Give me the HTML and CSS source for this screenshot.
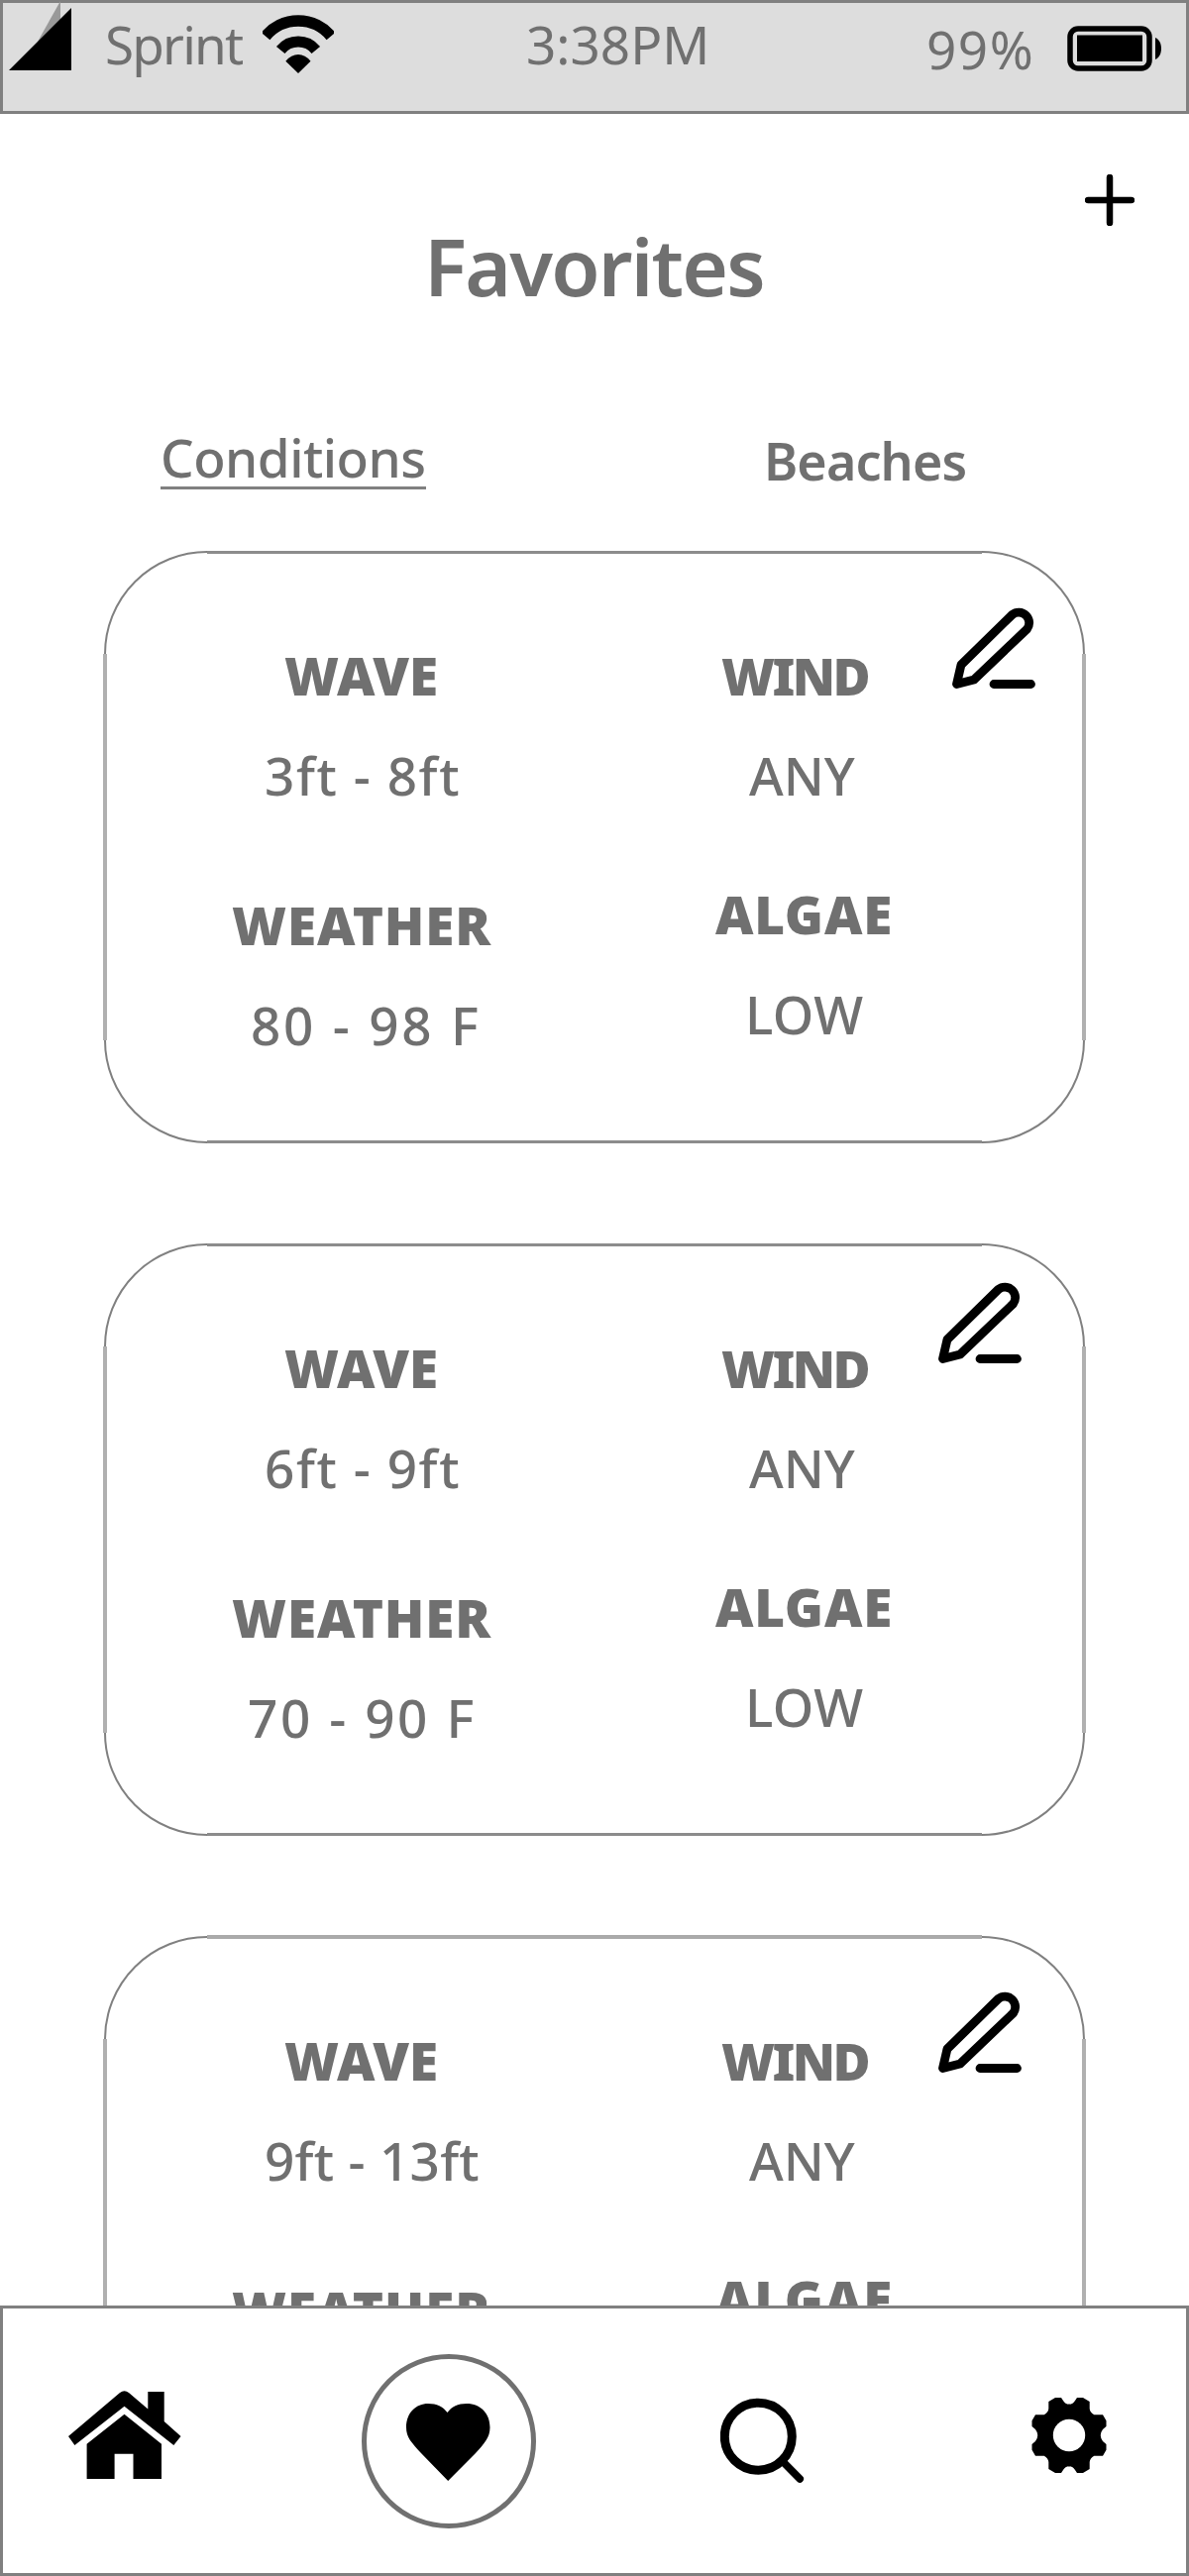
FILE: index.html
```
<!DOCTYPE html>
<html lang="en">
<head>
<meta charset="utf-8">
<title>Favorites</title>
<link rel="stylesheet" href="styles.css">
</head>
<body>
<svg width="0" height="0" class="defs">
  <symbol id="pencil" viewBox="0 0 84 83">
    <path d="M4.500 77.500L9 58 60.500 7.500A10.500 10.500 0 0 1 75.500 22L22 73ZM42 77.500H79.500" fill="none" stroke="#000" stroke-width="8.800" stroke-linejoin="round" stroke-linecap="round"/>
  </symbol>
</svg>
<div class="phone">
  <header class="status">
    <svg class="signal" width="64" height="72" viewBox="9 0 64 72"><path d="M38 42L61 1V24L45 40Z" fill="#999"/><path d="M9 71H72V8Z"/></svg>
    <span class="carrier">Sprint</span>
    <svg class="wifi" width="72" height="62" viewBox="0 0 72 62"><path d="M3 23.500A43 43 0 0 1 69 23.500" fill="none" stroke="#000" stroke-width="11.500"/><path d="M18.200 37.500A23 23 0 0 1 53.800 37.500" fill="none" stroke="#000" stroke-width="11"/><path d="M23.300 48.700Q29 42 36 42 43 42 48.500 48.700L36 61Z"/></svg>
    <span class="time">3:38PM</span>
    <span class="percent">99%</span>
    <svg class="battery" width="97" height="46" viewBox="0 0 97 46"><rect x="3" y="3" width="80" height="40" rx="8" fill="none" stroke="#000" stroke-width="5.500"/><rect x="10" y="9.500" width="66" height="26.500"/><path d="M89 12C97 15 97 31 89 34Z"/></svg>
  </header>
  <main>
    <div class="heading">
      <h1>Favorites</h1>
      <svg class="plus" width="50" height="52" viewBox="0 0 50 52"><path d="M3 26H47M25 3V49" stroke="#000" stroke-width="6.500" stroke-linecap="round"/></svg>
    </div>
    <nav class="tabs">
      <a class="tab active">Conditions</a>
      <a class="tab beaches">Beaches</a>
    </nav>
    <div class="cards">
      <section class="card first">
        <div class="left">
          <b class="wave">WAVE</b><span class="feet">3ft - 8ft</span>
          <b class="weather">WEATHER</b><span class="degrees">80 - 98 F</span>
        </div>
        <div class="right">
          <b class="wind">WIND</b><span class="any">ANY</span>
          <b class="algae">ALGAE</b><span class="low">LOW</span>
        </div>
        <svg class="edit" width="84" height="83"><use href="#pencil"/></svg>
      </section>
      <section class="card">
        <div class="left">
          <b class="wave">WAVE</b><span class="feet">6ft - 9ft</span>
          <b class="weather">WEATHER</b><span class="degrees cool">70 - 90 F</span>
        </div>
        <div class="right">
          <b class="wind">WIND</b><span class="any">ANY</span>
          <b class="algae">ALGAE</b><span class="low">LOW</span>
        </div>
        <svg class="edit" width="84" height="83"><use href="#pencil"/></svg>
      </section>
      <section class="card third">
        <div class="left">
          <b class="wave">WAVE</b><span class="feet long">9ft - 13ft</span>
          <b class="weather">WEATHER</b>
        </div>
        <div class="right">
          <b class="wind">WIND</b><span class="any">ANY</span>
          <b class="algae">ALGAE</b>
        </div>
        <svg class="edit" width="84" height="83"><use href="#pencil"/></svg>
      </section>
    </div>
  </main>
  <footer class="bar">
    <svg class="home" width="114" height="90" viewBox="0 0 114 90"><path d="M0 46L6.400 55 56.500 15.700 106.300 55 113.500 46 96.700 31V1H80.300V18.500L61 2Q56.500-1.500 52 2Z"/><path d="M56.500 23.700L94 53.700V89H65.500V63.700H46.600V89H18.600V53.700Z"/></svg>
    <div class="current">
      <svg width="85" height="78" viewBox="0 0 85 78"><path d="M42.200 78L15 50C5 39 0 34 0 24 0 9 10 0 22 0 31 0 37 3 41.500 9 46 3 52 0 61 0 75 0 84.500 10 84.500 24 84.500 34 79 40 70 50Z"/></svg>
    </div>
    <svg class="search" width="86" height="86" viewBox="0 0 86 86"><g fill="none" stroke="#000" stroke-linecap="round"><circle cx="38.300" cy="39.200" r="34" stroke-width="9"/><path d="M63 64.500L80.300 82" stroke-width="7.500"/></g></svg>
    <svg class="gear" width="78" height="78" viewBox="-39 -39 78 78"><path id="half" d="M0-31.300Q4-31.500 6-35L8-38H14L20.700-34V-27Q21-23 25.300-20.700H34L37.500-14.700V-9L34-6Q29.500 0 34 6L37.500 9V14.700L34 20.700H25.300Q21 23 20.700 27V34L14 38H8L6 35Q4 31.500 0 31.300H-1V-31.300Z"/><use href="#half" transform="scale(-1 1)"/><circle r="16.200" fill="#fff"/></svg>
  </footer>
</div>
</body>
</html>
```
FILE: styles.css
```
* { box-sizing: border-box; }
body {
  margin: 0;
  background: #fff;
  color: #707070;
  font-family: "Noto Sans", "Open Sans", sans-serif;
  font-size: 53px;
  font-weight: 500;
  line-height: 60px;
  white-space: nowrap;
}
svg { display: block; flex: none; }
.defs { position: absolute; }
.phone {
  width: 1200px;
  height: 2600px;
  display: flex;
  flex-direction: column;
}

/* Status bar */
.status {
  display: flex;
  align-items: flex-start;
  height: 115px;
  flex: none;
  padding-left: 6px;
  background: #ddd;
  border: 3px solid #808080;
  font-weight: 400;
}
.signal { margin-top: -3px; }
.carrier { width: 178px; margin: 12px 14px 0 0; padding-left: 33px; letter-spacing: -1.8px; }
.wifi { margin-top: 10px; }
.time { width: 186px; margin: 12px 0 0 194px; }
.percent { width: 110px; margin: 17px 0 0 218px; letter-spacing: 1.5px; }
.battery { margin: 23px 0 0 32px; }

/* Title and tabs */
main { flex: 1; min-height: 0; overflow: hidden; }
.heading { display: flex; padding-top: 61px; height: 318px; }
h1 {
  margin: 42px 0 0 428px;
  width: 667px;
  font-size: 80px;
  font-weight: 600;
  line-height: 100px;
  letter-spacing: -1.8px;
}
.tabs { display: flex; align-items: flex-start; height: 123px; padding-left: 162px; }
.tab { height: 61px; line-height: 58px; letter-spacing: -0.5px; }
.active { width: 268px; border-bottom: 3px solid #808080; }
.beaches { font-weight: 600; font-size: 52px; letter-spacing: -0.9px; margin: 3px 0 0 341px; }

/* Condition cards */
.cards { display: flex; flex-direction: column; gap: 101px; padding-left: 105px; }
.card {
  position: relative;
  display: flex;
  align-items: flex-start;
  flex: none;
  width: 990px;
  height: 598px;
  border: 2px solid #808080;
  border-radius: 104px;
}
.card::before, .card::after { content: ""; position: absolute; }
.card::before { inset: 102px -3px; border: solid #b0b0b0; border-width: 0 4px; }
.card::after { inset: -2px 102px; border: solid #8c8c8c; border-width: 3px 0; }
.third::after { inset: -3px 102px; border-color: #aaa; border-top-width: 4px; }
.left, .right { display: flex; flex-direction: column; padding-top: 94px; }
.left { width: 586px; }
.left b, .left span, .right b, .right span { width: max-content; }
.card b { font-weight: 900; margin-bottom: 41px; }
.wave { margin-left: 180px; letter-spacing: 0; }
.feet { margin-left: 160px; margin-bottom: 91px; letter-spacing: 1.6px; }
.long { letter-spacing: 0.3px; }
.weather { margin-left: 127px; letter-spacing: 0.9px; }
.degrees { margin-left: 146px; letter-spacing: 2.8px; }
.cool { margin-left: 143px; letter-spacing: 2.6px; }
.card .wind { margin-left: 35px; font-size: 52px; font-weight: 900; letter-spacing: -2.6px; }
.any { margin-left: 63px; margin-bottom: 80px; }
.algae { margin-left: 29px; letter-spacing: 0.8px; }
.low { margin-left: 59px; letter-spacing: 0.5px; }
.edit { position: absolute; right: 62px; top: 37px; }
.first .edit { right: 48px; top: 55px; }
.third .edit { top: 54px; }

/* Bottom navigation */
.bar {
  display: flex;
  align-items: flex-start;
  flex: none;
  height: 273px;
  background: #fff;
  border: 3px solid #808080;
}
.home { margin: 83px 0 0 66px; }
.current {
  display: flex;
  justify-content: center;
  width: 176px;
  height: 176px;
  margin: 46px 0 0 182px;
  padding-top: 45px;
  padding-right: 2px;
  border: 5px solid #707070;
  border-radius: 50%;
}
.search { margin: 90px 0 0 186px; }
.gear { margin: 89px 0 0 227px; }
```
